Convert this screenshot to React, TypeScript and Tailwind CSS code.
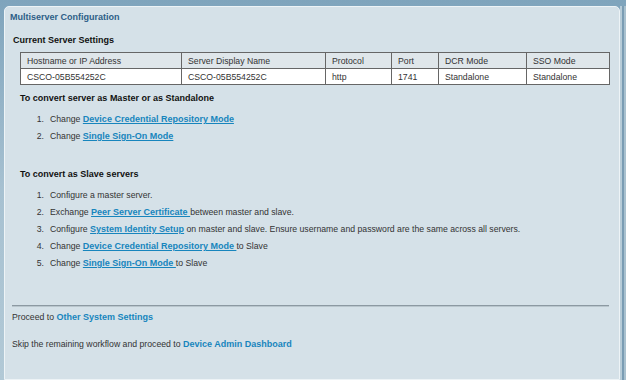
import React from 'react';

const font = { fontFamily: '"Liberation Sans", Arial, sans-serif' };

const Link: React.FC<{ children: React.ReactNode }> = ({ children }) => (
  <a className="font-bold text-[9px] text-[#1785bd] underline underline-offset-1 cursor-pointer">{children}</a>
);

const Step: React.FC<{ n: number; children: React.ReactNode }> = ({ n, children }) => (
  <li className="flex leading-[17px] h-[17px]">
    <span className="w-[24px] text-right">{n}.</span>
    <span className="ml-[6px] whitespace-nowrap">{children}</span>
  </li>
);

const cols = [
  { label: 'Hostname or IP Address', value: 'CSCO-05B554252C', w: 'w-[161px]' },
  { label: 'Server Display Name', value: 'CSCO-05B554252C', w: 'w-[144px]' },
  { label: 'Protocol', value: 'http', w: 'w-[66px]' },
  { label: 'Port', value: '1741', w: 'w-[47px]' },
  { label: 'DCR Mode', value: 'Standalone', w: 'w-[88px]' },
  { label: 'SSO Mode', value: 'Standalone', w: 'w-[83px]' },
];

export default function App() {
  return (
    <div
      style={font}
      className="w-[626px] h-[380px] overflow-hidden flex bg-gradient-to-b from-[#7fa4bc] via-[#a7c1d1] to-[#b2c9d6] pt-[6px] pl-[4px]"
    >
      <div className="flex-1 flex flex-col bg-[#d5e1e8] border border-[#edf3f6] rounded-t-[5px] text-[8.7px] text-[#333] pl-[5px] pt-[4px]">
        <div className="font-bold text-[9px] text-[#2d5e87] leading-[12px]">Multiserver Configuration</div>

        <div className="mt-[11px] ml-[3px] font-bold text-[9px] text-[#111] leading-[12px]">Current Server Settings</div>

        <table className="mt-[6px] ml-[10px] border-collapse w-[589px] table-fixed">
          <tbody>
            <tr className="bg-[#dfe6ea]">
              {cols.map((c) => (
                <td key={c.label} className={`${c.w} h-[16px] border border-[#666] px-[6px] py-0 leading-[14px] whitespace-nowrap`}>
                  {c.label}
                </td>
              ))}
            </tr>
            <tr className="bg-white">
              {cols.map((c) => (
                <td key={c.label} className="h-[16px] border border-[#666] px-[6px] py-0 leading-[14px] whitespace-nowrap">
                  {c.value}
                </td>
              ))}
            </tr>
          </tbody>
        </table>

        <div className="mt-[7px] ml-[10px] font-bold text-[9px] text-[#111] leading-[12px]">
          To convert server as Master or as Standalone
        </div>
        <ol className="mt-[7px] ml-[10px]">
          <Step n={1}>
            Change <Link>Device Credential Repository Mode</Link>
          </Step>
          <Step n={2}>
            Change <Link>Single Sign-On Mode</Link>
          </Step>
        </ol>

        <div className="mt-[23px] ml-[10px] font-bold text-[9px] text-[#111] leading-[12px]">To convert as Slave servers</div>
        <ol className="mt-[7px] ml-[10px]">
          <Step n={1}>Configure a master server.</Step>
          <Step n={2}>
            Exchange <Link>Peer Server Certificate </Link>between master and slave.
          </Step>
          <Step n={3}>
            Configure <Link>System Identity Setup</Link> on master and slave. Ensure username and password are the same across all servers.
          </Step>
          <Step n={4}>
            Change <Link>Device Credential Repository Mode </Link>to Slave
          </Step>
          <Step n={5}>
            Change <Link>Single Sign-On Mode </Link>to Slave
          </Step>
        </ol>

        <div className="mt-[33px] ml-[2px] w-[597px] h-[2px] border-t border-[#8c99a2] border-b border-b-[#b9c6cd]" />

        <div className="mt-[4px] ml-[2px] leading-[12px]">
          Proceed to <span className="font-bold text-[9px] text-[#1785bd]">Other System Settings</span>
        </div>
        <div className="mt-[15px] ml-[2px] leading-[12px]">
          Skip the remaining workflow and proceed to <span className="font-bold text-[9px] text-[#1785bd]">Device Admin Dashboard</span>
        </div>
      </div>
      <div className="w-[6px] flex">
        <div className="w-[2px] bg-[#b7ccd8]" />
        <div className="w-[2px] bg-[#7b9db4]" />
        <div className="w-[2px] bg-[#a9c1cf]" />
      </div>
    </div>
  );
}
